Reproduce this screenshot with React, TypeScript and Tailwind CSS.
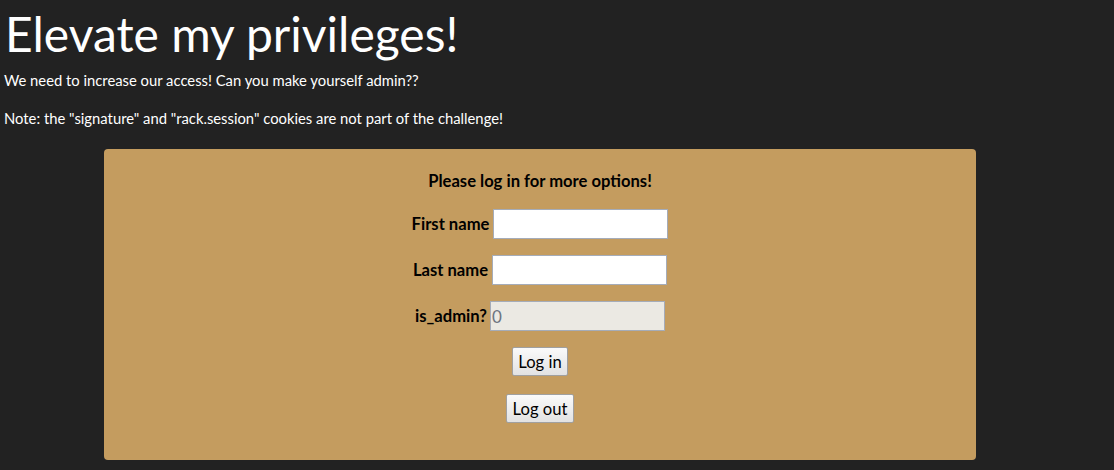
export default function App() {
  return (
    <div className="min-h-[470px] w-full bg-[#222222] text-white font-['Lato','Liberation_Sans',sans-serif]">
      <h1 className="pl-[5px] pt-[4px] text-[48px] leading-[60px] font-normal">Elevate my privileges!</h1>
      <p className="pl-[4px] mt-[6px] text-[14.8px] leading-[20px]">We need to increase our access! Can you make yourself admin??</p>
      <p className="pl-[4px] mt-[18px] text-[14.8px] leading-[20px]">
        Note: the "signature" and "rack.session" cookies are not part of the challenge!
      </p>
      <div className="ml-[104px] mt-[21px] h-[311px] w-[872px] rounded-[4px] bg-[#c49c5f] text-black">
        <div className="flex flex-col items-center pt-[20px] text-[16.6px]">
          <p className="font-bold leading-[24px]">Please log in for more options!</p>
          <div className="mt-[16px] flex items-center gap-[4px]">
            <label className="font-bold">First name</label>
            <input className="h-[30px] w-[175px] border border-[#a5acb9] bg-white px-[2px] outline-none" />
          </div>
          <div className="mt-[16px] flex items-center gap-[4px]">
            <label className="font-bold">Last name</label>
            <input className="h-[30px] w-[175px] border border-[#a5acb9] bg-white px-[2px] outline-none" />
          </div>
          <div className="mt-[16px] flex items-center gap-[3px]">
            <label className="font-bold">is_admin?</label>
            <input
              disabled
              value="0"
              readOnly
              className="h-[30px] w-[175px] border border-[#a5acb9] bg-[#ebe9e3] px-[1px] text-[17px] text-[#6d7480] outline-none"
            />
          </div>
          <button className="mt-[16px] h-[29px] rounded-[2px] border border-[#a0a0a0] bg-gradient-to-b from-[#fafafa] to-[#e2e2e2] px-[5px] leading-[20px]">
            Log in
          </button>
          <button className="mt-[18px] h-[29px] rounded-[2px] border border-[#a0a0a0] bg-gradient-to-b from-[#fafafa] to-[#e2e2e2] px-[6px] leading-[20px]">
            Log out
          </button>
        </div>
      </div>
      <div className="h-[10px]" />
    </div>
  );
}
